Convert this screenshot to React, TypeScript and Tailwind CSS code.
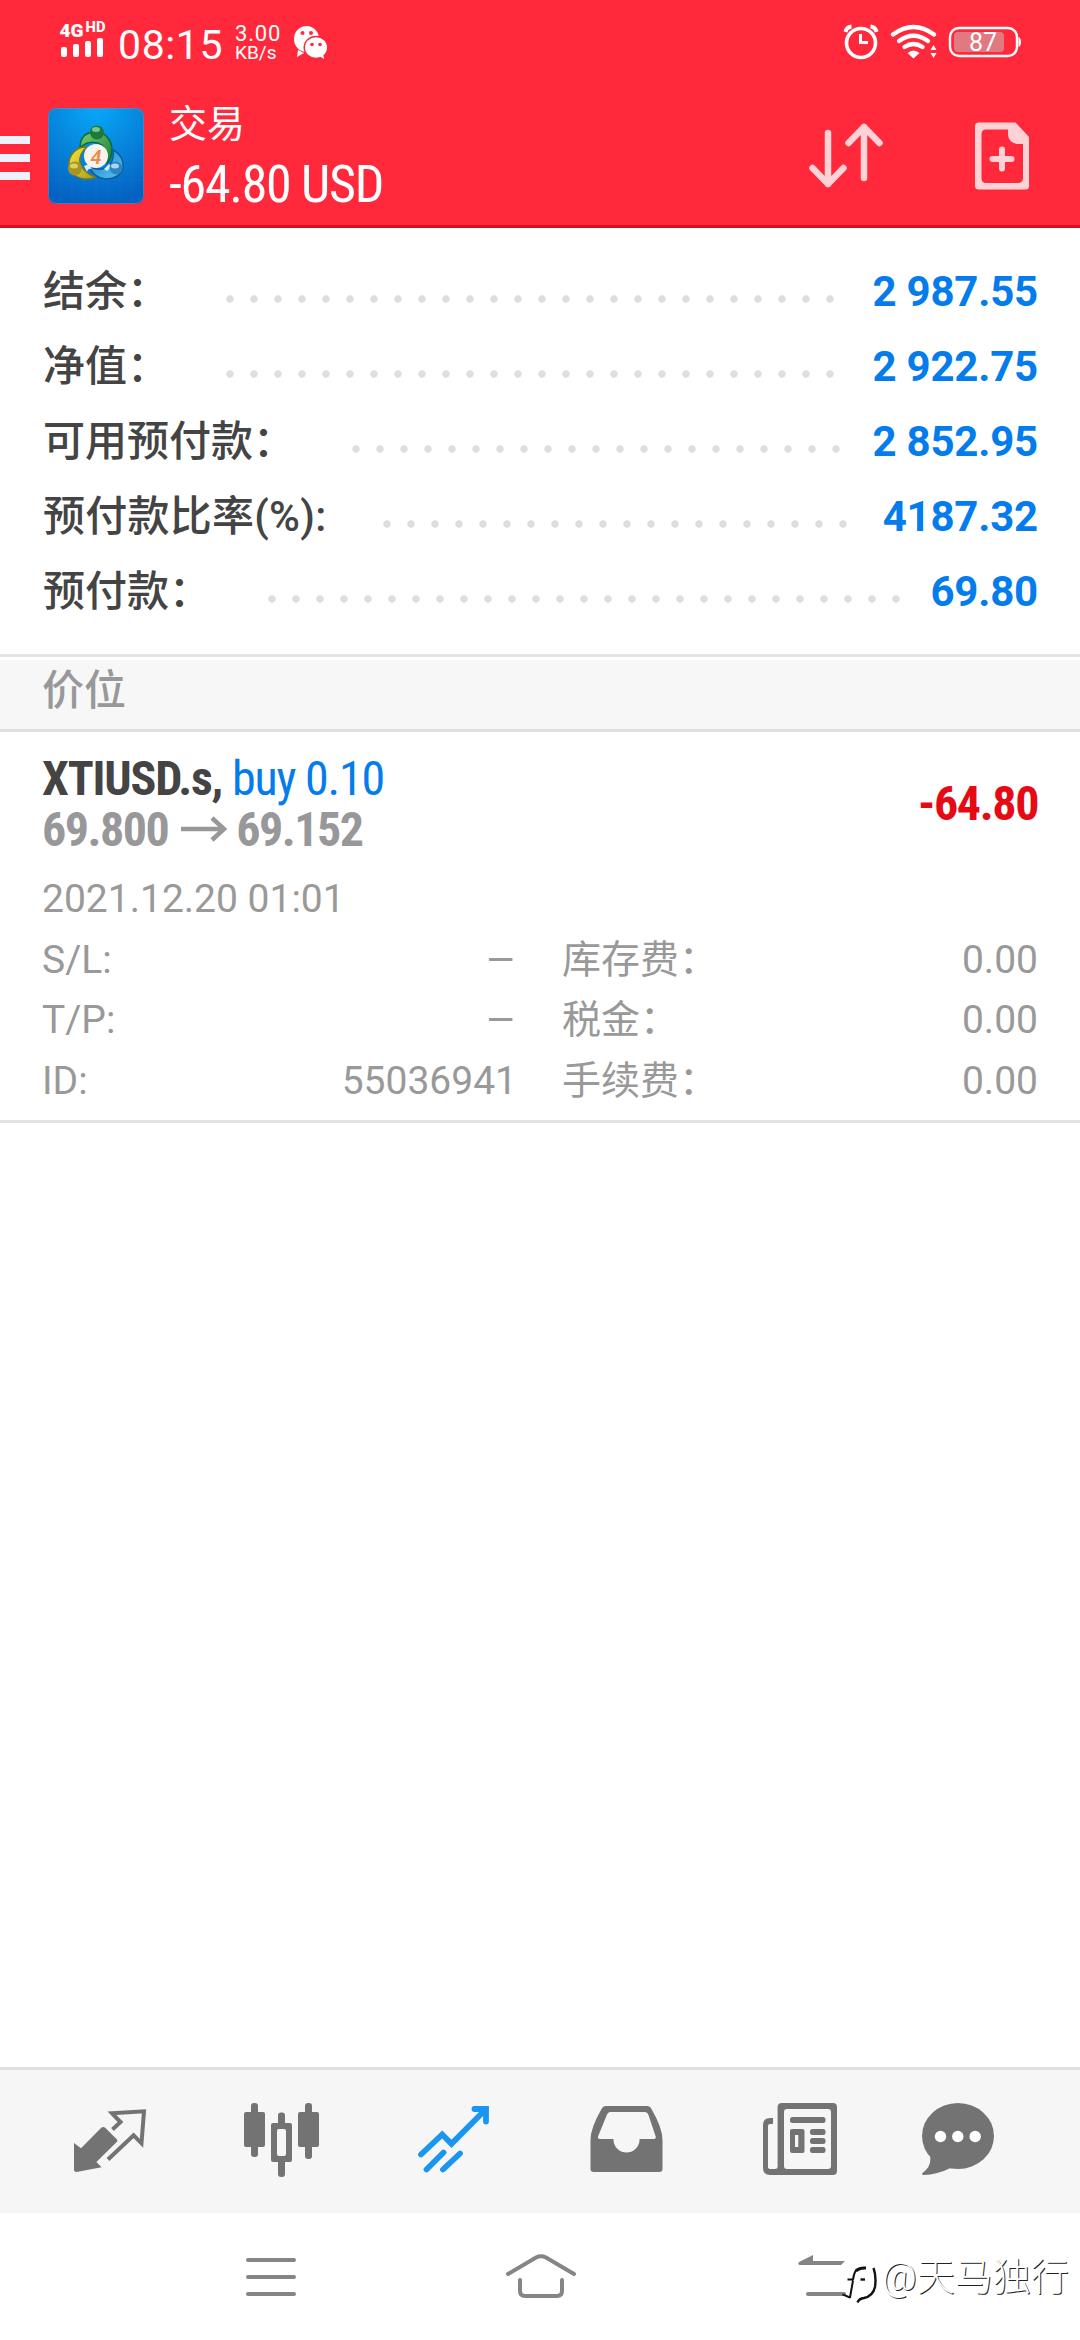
import React from 'react';

interface AccountRow {
  label: string;
  dots: number;
  value: string;
}

const accountRows: AccountRow[] = [
  { label: '结余：', dots: 26, value: '2 987.55' },
  { label: '净值：', dots: 26, value: '2 922.75' },
  { label: '可用预付款：', dots: 21, value: '2 852.95' },
  { label: '预付款比率(%):', dots: 20, value: '4187.32' },
  { label: '预付款：', dots: 27, value: '69.80' },
];

const positionDetails = [
  { left: 'S/L:', leftValue: '–', right: '库存费：', rightValue: '0.00' },
  { left: 'T/P:', leftValue: '–', right: '税金：', rightValue: '0.00' },
  { left: 'ID:', leftValue: '55036941', right: '手续费：', rightValue: '0.00' },
];

const DOT_STEP = 24;

function StatusBar() {
  return (
    <div className="flex h-[84px] items-start pl-[59px] pr-[57px] pt-[20px] text-white">
      {/* 信号 */}
      <svg width="48" height="40" viewBox="59 20 48 40" fill="#fff">
        <text x="59.5" y="37" fontSize="19" fontWeight="900" textLength="24" lengthAdjust="spacingAndGlyphs">4G</text>
        <text x="85.5" y="32" fontSize="14" fontWeight="800" textLength="20" lengthAdjust="spacingAndGlyphs">HD</text>
        <rect x="61" y="47" width="6" height="10" rx="2" />
        <rect x="73" y="44" width="6" height="13" rx="2" />
        <rect x="85" y="41" width="6" height="16" rx="2" />
        <rect x="97" y="38" width="6" height="19" rx="2" />
      </svg>
      <span className="ml-[11px] text-[41px] leading-[50px] tracking-[0.6px]">08:15</span>
      <div className="ml-[12px] flex w-[50px] flex-col pt-[3px]">
        <span className="text-[22px] leading-[21px] tracking-[0.8px]">3.00</span>
        <span className="text-[19px] leading-[17px]">KB/s</span>
      </div>
      {/* 微信 */}
      <svg className="ml-[8px] mt-[5px]" width="36" height="36" viewBox="293 25 36 36">
        <path d="M298 50l-1 7 7-4z" fill="#fff" />
        <ellipse cx="306.500" cy="39" rx="12.500" ry="13" fill="#fff" />
        <circle cx="302.500" cy="33" r="2" fill="#ff293b" />
        <circle cx="311" cy="33" r="2" fill="#ff293b" />
        <ellipse cx="316" cy="47.500" rx="12.500" ry="11.800" fill="#ff293b" />
        <ellipse cx="316" cy="47.500" rx="11" ry="10.200" fill="#fff" />
        <path d="M319 56l5 3-1-6z" fill="#fff" />
        <circle cx="312" cy="44.500" r="1.800" fill="#ff293b" />
        <circle cx="320" cy="44.500" r="1.800" fill="#ff293b" />
      </svg>
      <div className="flex-1" />
      <svg width="182" height="44" viewBox="840 20 182 44" fill="none" stroke="#fff">
        {/* 闹钟 */}
        <circle cx="860" cy="43" r="14.500" strokeWidth="3.600" />
        <path d="M859.500 34v8.500h7.500" strokeWidth="3" />
        <path d="M844.500 32q1-5 6-5.500M875.500 32q-1-5-6-5.500" strokeWidth="4" />
        {/* Wi-Fi */}
        <path d="M892 34.500q20.500-15 41 0" strokeWidth="4.300" strokeLinecap="round" />
        <path d="M898 41q14.500-10.500 29 0" strokeWidth="4.300" strokeLinecap="round" />
        <path d="M903.500 47q9-6 18 0" strokeWidth="4.300" strokeLinecap="round" />
        <path d="M906.500 53q6-5 12 0l-6 5.500z" fill="#fff" stroke="none" />
        <path d="M929.500 50l3-5 3 5zM929.500 53h6l-3 5z" fill="#fff" stroke="none" />
        {/* 电池 */}
        <rect x="949" y="28" width="67" height="28" rx="9" strokeWidth="2.400" />
        <rect x="953" y="32" width="50" height="20" rx="4" fill="#e07a80" stroke="none" />
        <path d="M1017.500 37q2.500 1 2.500 5t-2.500 5z" fill="#fff" stroke="none" />
        <text x="968" y="51" fontSize="25" fill="#fff" stroke="none" textLength="28">87</text>
      </svg>
    </div>
  );
}

function AppLogo() {
  return (
    <svg className="ml-[18px] mt-[24px]" width="96" height="96" viewBox="0 0 96 96">
      <defs>
        <radialGradient id="sky" cx="0.5" cy="0" r="1">
          <stop offset="0" stopColor="#08a8f8" />
          <stop offset="1" stopColor="#0461c0" />
        </radialGradient>
        <linearGradient id="green" x1="0" y1="0" x2="1" y2="1">
          <stop offset="0" stopColor="#7fd06c" />
          <stop offset="1" stopColor="#10783a" />
        </linearGradient>
        <linearGradient id="yellow" x1="0" y1="0" x2="1" y2="1">
          <stop offset="0" stopColor="#f4e83a" />
          <stop offset="1" stopColor="#a9991c" />
        </linearGradient>
        <linearGradient id="blue" x1="0" y1="0" x2="1" y2="1">
          <stop offset="0" stopColor="#1c84c6" />
          <stop offset="1" stopColor="#5cc4f2" />
        </linearGradient>
      </defs>
      <rect width="96" height="96" rx="8" fill="url(#sky)" />
      <rect x="0.500" y="0.500" width="95" height="95" rx="8" fill="none" stroke="#7d7ca8" strokeOpacity="0.7" />
      <path d="M12 2v92M24 2v92M36 2v92M48 2v92M60 2v92M72 2v92M84 2v92M2 24h92M2 48h92M2 72h92" stroke="#2b9de8" strokeOpacity="0.15" />
      <path d="M32 40C32 28 39 24 48 24s16 8 16 18c0 6-2 10-5 13-1-6-1-14-5-18-6-4-16-4-22 3z" fill="url(#green)" stroke="#0b6a3a" strokeWidth="1.500" />
      <path d="M39 39c-10-1-19 8-18 19 1 8 9 13 18 13 4 0 7-1 9-2-8-2-14-8-16-14-1-6 2-12 7-16z" fill="url(#yellow)" stroke="#6f7a22" strokeWidth="1.500" />
      <path d="M65 42c8 4 11 12 10 18-2 8-10 11-17 11-7 0-14-5-16-12 7 3 14 3 19-1 4-4 5-11 4-16z" fill="url(#blue)" stroke="#0b5ea4" strokeWidth="1.500" />
      <path d="M36 58l5-2 3 5q-4-1-5 3zM56 61l5-5 4 3q-4 1-6 4z" fill="#d8f0f4" />
      <circle cx="49" cy="24.500" r="7" fill="#1d7a3a" />
      <ellipse cx="48" cy="21.500" rx="4" ry="2.500" fill="#7cc58b" />
      <circle cx="27" cy="60.500" r="7" fill="#a8951f" />
      <ellipse cx="26" cy="58" rx="4" ry="2.500" fill="#e0cf60" />
      <circle cx="68" cy="60" r="6.500" fill="#2f86bd" />
      <ellipse cx="67" cy="58" rx="4" ry="2.500" fill="#a4d8f4" />
      <circle cx="48" cy="48" r="12" fill="#f6f3ee" />
      <text x="48" y="55.500" textAnchor="middle" fontSize="20" fontStyle="italic" fontWeight="600" fill="#ec8b48">4</text>
    </svg>
  );
}

function Toolbar() {
  return (
    <div className="flex h-[141px] items-start text-white">
      <div className="mt-[52px] flex w-[30px] flex-col gap-[10px]">
        <span className="h-[8px] bg-[#eef1fb]" />
        <span className="h-[8px] bg-[#eef1fb]" />
        <span className="h-[8px] bg-[#eef1fb]" />
      </div>
      <AppLogo />
      <div className="ml-[25px] flex flex-1 flex-col pt-[14px]">
        <span className="h-[57px] text-[38px] leading-[52px]">交易</span>
        <span className="text-[52px] leading-[60px] tracking-[-1.3px] [font-family:'Roboto_Condensed',Roboto] [font-stretch:75%]">-64.80 USD</span>
      </div>
      <svg className="mt-[36px]" width="80" height="72" viewBox="806 120 80 72" fill="none" stroke="#ffd3d6" strokeWidth="6.500" strokeLinecap="round" strokeLinejoin="round">
        <path d="M828 133v51M812.500 168l15.500 16 15.500-16" />
        <path d="M864 178v-51M848.500 143l15.500-16 15.500 16" />
      </svg>
      <svg className="ml-[86px] mr-[48px] mt-[36px]" width="60" height="72" viewBox="972 120 60 72">
        <path
          fillRule="evenodd"
          fill="#ffd3d6"
          d="M979 122.500h36.500l13.500 14.500v49q0 3.500-3.500 3.500h-46.500q-4 0-4-3.500v-60q0-3.500 4-3.500zM986 129.500q-4.500 0-4.500 4.500v44q0 5 4.500 5h32q5 0 5-5v-34h-6q-9-2-9-10v-4.500z"
        />
        <path d="M1002 149.500v19M992.500 159h19" stroke="#ffd3d6" strokeWidth="6" strokeLinecap="round" />
      </svg>
    </div>
  );
}

function AccountSummary() {
  return (
    <div className="border-b-[3px] border-[#e3e3e3] pb-[25px] pl-[43px] pr-[42px] pt-[26px]">
      {accountRows.map((row) => (
        <div key={row.label} className="flex h-[75px] text-[42px] leading-[75px]">
          <span className={`font-medium text-[#444444] ${row.label.includes('%') ? 'tracking-[0.25px]' : ''}`}>{row.label}</span>
          <span
            className="ml-[49px] mt-[41px] h-[8px] bg-[radial-gradient(circle,#dedede_3.3px,transparent_4.200px)] bg-[length:24px_8px]"
            style={{ width: row.dots * DOT_STEP }}
          />
          <span className="ml-auto font-bold tracking-[-0.2px] text-[#057ceb]">{row.value}</span>
        </div>
      ))}
    </div>
  );
}

function PositionItem() {
  return (
    <div className="border-b-[3px] border-[#e3e3e3] px-[42px] pb-[9px] pt-[22px]">
      <div className="flex items-center justify-between text-[48px] leading-[50.5px] tracking-[-1.2px] [font-family:'Roboto_Condensed',Roboto] [font-stretch:75%]">
        <div>
          <div className="font-bold text-[#444444]">
            XTIUSD.s, <span className="font-normal text-[#057ceb]">buy 0.10</span>
          </div>
          <div className="flex font-bold tracking-[-1.5px] text-[#98989a]">
            69.800
            <svg className="ml-[12px] mr-[8px] mt-[11px]" width="48" height="26" viewBox="180 815 48 26" fill="none" stroke="#98989a" strokeWidth="4.500">
              <path d="M181 828h43M212 817l12 11-12 11" />
            </svg>
            69.152
          </div>
        </div>
        <div className="font-bold tracking-[-1.4px] text-[#e60a14]">-64.80</div>
      </div>
      <div className="mt-[14px] text-[39px] leading-[60.5px] text-[#999999]">
        <div>2021.12.20 01:01</div>
        {positionDetails.map((item) => (
          <div key={item.left} className="flex">
            <div className="flex w-[475px] justify-between">
              <span>{item.left}</span>
              <span className={item.leftValue === '–' ? 'origin-right scale-x-[1.22]' : ''}>{item.leftValue}</span>
            </div>
            <div className="ml-[45px] flex flex-1 justify-between">
              <span>{item.right}</span>
              <span>{item.rightValue}</span>
            </div>
          </div>
        ))}
      </div>
    </div>
  );
}

function TabBar() {
  return (
    <div className="flex h-[146px] items-start justify-between border-t-[3px] border-[#e0e0e0] bg-[#f6f6f6] px-[62px] pt-[20px]">
      {/* 行情 */}
      <svg width="96" height="96" viewBox="62 40 96 96">
        <path d="M74 93l7 5.300L101.500 77.500q1.800-1 3.500 0L117 89.500q.8 1.200 0 2.200L96.400 112l5.200 5.300L76.500 122q-2.500 0-2.500-2z" fill="#737373" />
        <path d="M112.500 79.500l8-7.500-8.500-8.700 32-2-2.500 32-7.900-8L108 109.500" fill="none" stroke="#737373" strokeWidth="4" />
      </svg>
      {/* 图表 */}
      <svg width="96" height="96" viewBox="234 40 96 96" fill="#737373">
        <rect x="251" y="53" width="7" height="54" rx="3" />
        <rect x="244" y="62" width="21" height="35" rx="2" />
        <rect x="278" y="62.500" width="7" height="64.500" rx="3" />
        <rect x="271" y="73" width="21" height="39" rx="2" />
        <rect x="277" y="79" width="9" height="27" rx="2" fill="#f6f6f6" />
        <rect x="305" y="53" width="7" height="56" rx="3" />
        <rect x="298" y="62" width="21" height="35" rx="2" />
      </svg>
      {/* 交易 */}
      <svg width="96" height="96" viewBox="406 40 96 96" fill="none" stroke="#1a96f0" strokeWidth="5.800" strokeLinecap="round">
        <path d="M421 104.500L442.200 84.500l9.300 9.300L486 59M474.500 59h11.500v12.500" />
        <path d="M426.500 119.500l17-17M443 119.500l17-16" />
      </svg>
      {/* 历史 */}
      <svg width="96" height="96" viewBox="578 40 96 96" fill="#737373">
        <path
          fillRule="evenodd"
          d="M606 56h41q3 0 4.500 3 11 19 11 31v29q0 3-3.500 3h-65q-3.500 0-3.500-3v-29q0-12 11-31 1.500-3 4.500-3zM610 62q-2 0-3 2.500l-9 22q-.5 2.500 2 2.500h13.500v2a13.100 13.100 0 0 0 26 0v-2h14q2.800 0 2.200-2.500l-7.200-21.500q-1-3-4-3z"
        />
      </svg>
      {/* 新闻 */}
      <svg width="96" height="96" viewBox="750 40 96 96" fill="#737373">
        <path
          fillRule="evenodd"
          d="M782 53h51q4 0 4 4v64q0 4-4 4h-63q-7 0-7-7v-43q0-7 7-7h3v6h-3q-2 0-2 2v41q0 2 3 2h4q2.600 0 2.600-2v-60q0-4 4.400-4zM787 59q-3 0-3 3v54q0 3 3 3h41q3 0 3-3v-54q0-3-3-3z"
        />
        <rect x="790" y="67" width="35.500" height="6" rx="2.500" />
        <path fillRule="evenodd" d="M792 79h10.500q2 0 2 2v20q0 2-2 2h-10.500q-2 0-2-2v-20q0-2 2-2zM795 85v12h3.300v-12z" />
        <rect x="810" y="79" width="15.500" height="6" rx="2.500" />
        <rect x="810" y="88" width="15.500" height="6" rx="2.500" />
        <rect x="810" y="97" width="15.500" height="6" rx="2.500" />
      </svg>
      {/* 聊天 */}
      <svg width="96" height="96" viewBox="922 40 96 96" fill="#737373">
        <ellipse cx="958" cy="86" rx="36" ry="33" />
        <path d="M930 106q2 10-7.500 17-1 2 1 2 14-.5 27-7z" />
        <circle cx="940.500" cy="86.500" r="5.700" fill="#fff" />
        <circle cx="957.800" cy="86.500" r="5.700" fill="#fff" />
        <circle cx="975.200" cy="86.500" r="5.700" fill="#fff" />
      </svg>
    </div>
  );
}

function SystemNav() {
  return (
    <div className="flex h-[127px] items-start pl-[246px] pt-[36px]">
      <svg width="50" height="56" viewBox="246 2249 50 56" stroke="#858585" strokeWidth="4" strokeLinecap="round">
        <path d="M248 2260h46M248 2277h46M248 2294h46" />
      </svg>
      <svg className="ml-[208px]" width="76" height="56" viewBox="504 2249 76 56" fill="none" stroke="#858585" strokeWidth="4" strokeLinecap="round">
        <path d="M508 2274l28-16.500q5-2.500 10 0l28 16.500" />
        <path d="M520 2280v11q0 5 5 5h32q5 0 5-5v-11" />
      </svg>
      <svg className="ml-[216px]" width="86" height="64" viewBox="796 2249 86 64" fill="none">
        <path d="M845 2261l-4 4h-41q-3-.5-1-3l14-7v6z" fill="#858585" />
        <path d="M808 2294h36" stroke="#858585" strokeWidth="4" strokeLinecap="round" />
        {/* 水印标志 */}
        <path d="M866 2268q-9-.5-11 4-1 2-2 7.500h-5.500M853 2280.500l-3 17-7.500-3.200" stroke="#111" strokeWidth="2" strokeLinejoin="bevel" />
        <path d="M866 2268q-7-.5-10 3" stroke="#111" strokeWidth="3" />
        <path d="M873.500 2268q3 8 1.500 19-2 9-11 11-5 .5-6.500 4.500" stroke="#111" strokeWidth="2.400" />
        <path d="M860.500 2279.500h4.500" stroke="#111" strokeWidth="2.400" />
      </svg>
      <span className="text-[38px] font-light leading-[56px] text-white [text-shadow:1px_1px_0.500px_#222]">@天马独行</span>
    </div>
  );
}

export default function App() {
  return (
    <div className="flex h-[2340px] w-[1080px] flex-col overflow-hidden whitespace-nowrap bg-white [font-family:Roboto,'Noto_Sans_CJK_SC',sans-serif]">
      <header className="border-b-[3px] border-[#d80f22] bg-[#ff293b]">
        <StatusBar />
        <Toolbar />
      </header>
      <main className="flex-1">
        <AccountSummary />
        <div className="mt-[3px] h-[72px] border-b-[3px] border-[#e0e0e0] bg-[#f7f7f7] pl-[42px] text-[42px] font-medium leading-[61px] text-[#98989a]">
          价位
        </div>
        <PositionItem />
      </main>
      <TabBar />
      <SystemNav />
    </div>
  );
}
